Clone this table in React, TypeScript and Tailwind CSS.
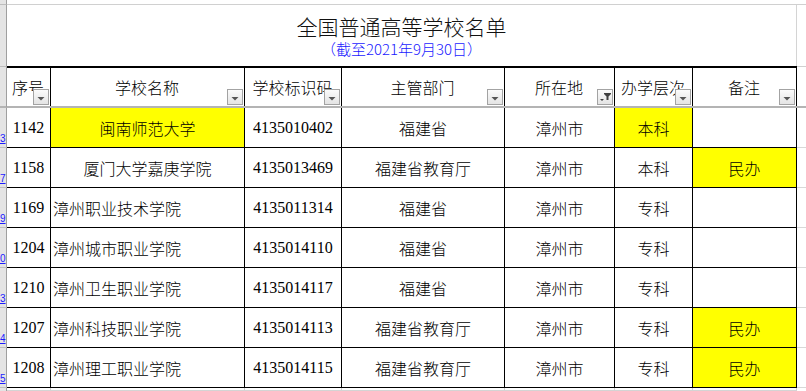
import React from 'react';

type School = {
  no: string;
  name: string;
  code: string;
  dept: string;
  city: string;
  level: string;
  note: string;
  rowNum: string;
  nameLeft?: boolean;
  nameHi?: boolean;
  levelHi?: boolean;
};

const schools: School[] = [
  { no: '1142', name: '闽南师范大学', code: '4135010402', dept: '福建省', city: '漳州市', level: '本科', note: '', rowNum: '3', nameHi: true, levelHi: true },
  { no: '1158', name: '厦门大学嘉庚学院', code: '4135013469', dept: '福建省教育厅', city: '漳州市', level: '本科', note: '民办', rowNum: '7' },
  { no: '1169', name: '漳州职业技术学院', code: '4135011314', dept: '福建省', city: '漳州市', level: '专科', note: '', rowNum: '9', nameLeft: true },
  { no: '1204', name: '漳州城市职业学院', code: '4135014110', dept: '福建省', city: '漳州市', level: '专科', note: '', rowNum: '0', nameLeft: true },
  { no: '1210', name: '漳州卫生职业学院', code: '4135014117', dept: '福建省', city: '漳州市', level: '专科', note: '', rowNum: '3', nameLeft: true },
  { no: '1207', name: '漳州科技职业学院', code: '4135014113', dept: '福建省教育厅', city: '漳州市', level: '专科', note: '民办', rowNum: '4', nameLeft: true },
  { no: '1208', name: '漳州理工职业学院', code: '4135014115', dept: '福建省教育厅', city: '漳州市', level: '专科', note: '民办', rowNum: '5', nameLeft: true },
];

const cjk = "font-['Noto_Sans_CJK_SC',sans-serif]";
const num = "font-['Liberation_Serif','Noto_Sans_CJK_SC',serif]";

function DropButton({ filtered }: { filtered?: boolean }) {
  return (
    <div className="absolute right-0 bottom-[1px] w-4 h-4 border border-[#a3a3a3] bg-gradient-to-b from-[#fbfbfb] to-[#e4e4e4]">
      {filtered ? (
        <svg width="14" height="14" viewBox="0 0 14 14" className="block">
          <polygon points="2,9 6,9 4,11" fill="#404040" />
          <polygon points="6,3 13,3 13,4 10.5,6.5 10.5,10 8.5,10 8.5,6.5 6,4" fill="#404040" />
        </svg>
      ) : (
        <svg width="14" height="14" viewBox="0 0 14 14" className="block">
          <polygon points="3.5,7 10.5,7 7,10.5" fill="#555555" />
        </svg>
      )}
    </div>
  );
}

function HeaderCell({ label, w, filtered }: { label: string; w: string; filtered?: boolean }) {
  return (
    <div className={`relative ${w} h-full flex items-center justify-center border-r border-black pr-[1px]`}>
      <span className="whitespace-nowrap">{label}</span>
      <div className="absolute right-[1px] bottom-0 w-4 h-4">
        <DropButton filtered={filtered} />
      </div>
    </div>
  );
}

function Cell({ w, children, hi, left, digits }: { w: string; children?: React.ReactNode; hi?: boolean; left?: boolean; digits?: boolean }) {
  return (
    <div
      className={`${w} h-full flex items-center border-r border-black whitespace-nowrap overflow-hidden ${
        left ? 'justify-start pl-[2px]' : 'justify-center'
      } ${hi ? 'bg-[#ffff00]' : ''} ${digits ? num : ''}`}
    >
      {children}
    </div>
  );
}

function RowHead({ label, className = '' }: { label?: string; className?: string }) {
  return (
    <div className={`w-[7px] shrink-0 h-full bg-[#e4e4e4] border-r border-[#9f9f9f] flex items-end justify-start ${className}`}>
      {label && (
        <span className="font-['Liberation_Sans',sans-serif] text-[10px] leading-none text-[#1a1aff] pb-[3px] underline">
          {label}
        </span>
      )}
    </div>
  );
}

const widths = ['w-[44px]', 'w-[194px]', 'w-[97px]', 'w-[163px]', 'w-[110px]', 'w-[78px]', 'w-[104px]'];

export default function App() {
  return (
    <div className={`w-[806px] h-[391px] overflow-hidden bg-white text-black text-[16px] font-light ${cjk}`}>
      {/* top strip */}
      <div className="flex h-[5px]">
        <RowHead className="border-b border-b-[#bdbdbd]" />
        <div className="flex-1 border-b border-[#d0d0d0]" />
      </div>

      {/* title */}
      <div className="flex h-[61px]">
        <RowHead />
        <div className="w-[790px] h-full border-r border-[#d4d4d4] flex flex-col items-center pt-[10px]">
          <div className="text-[21px] leading-[22px] text-[#111]">全国普通高等学校名单</div>
          <div className="text-[15px] leading-[16px] mt-[4px] text-[#1a1aff]">（截至2021年9月30日）</div>
        </div>
        <div className="flex-1" />
      </div>

      {/* header */}
      <div className="flex h-[42px]">
        <RowHead className="border-t border-t-[#bdbdbd] border-b-2 border-b-[#b4b4b4]" />
        <div className="flex h-full border-t-2 border-black border-b-2 border-b-[#b4b4b4]">
          <HeaderCell label="序号" w={widths[0]} />
          <HeaderCell label="学校名称" w={widths[1]} />
          <HeaderCell label="学校标识码" w={widths[2]} />
          <HeaderCell label="主管部门" w={widths[3]} />
          <HeaderCell label="所在地" w={widths[4]} filtered />
          <HeaderCell label="办学层次" w={widths[5]} />
          <HeaderCell label="备注" w={widths[6]} />
        </div>
        <div className="flex-1 border-t border-[#d0d0d0] border-b-2 border-b-[#b4b4b4]" />
      </div>

      {/* data rows */}
      {schools.map((s) => (
        <div key={s.no} className="flex h-[40px]">
          <RowHead label={s.rowNum} className="border-b border-b-[#bdbdbd]" />
          <div className="flex h-full border-b border-black">
            <Cell w={widths[0]} digits>{s.no}</Cell>
            <Cell w={widths[1]} hi={s.nameHi} left={s.nameLeft}>{s.name}</Cell>
            <Cell w={widths[2]} digits>{s.code}</Cell>
            <Cell w={widths[3]}>{s.dept}</Cell>
            <Cell w={widths[4]}>{s.city}</Cell>
            <Cell w={widths[5]} hi={s.levelHi}>{s.level}</Cell>
            <Cell w={widths[6]} hi={!!s.note}>{s.note}</Cell>
          </div>
          <div className="flex-1 border-b border-[#d8d8d8]" />
        </div>
      ))}

      {/* next row peek */}
      <div className="flex h-[10px]">
        <RowHead />
        <div className="flex h-full">
          {widths.map((w, i) => (
            <div key={i} className={`${w} h-full border-r border-[#d4d4d4] pt-[2px]`}>
              <div className="border-t border-[#d4d4d4]" />
            </div>
          ))}
        </div>
        <div className="flex-1" />
      </div>
    </div>
  );
}
